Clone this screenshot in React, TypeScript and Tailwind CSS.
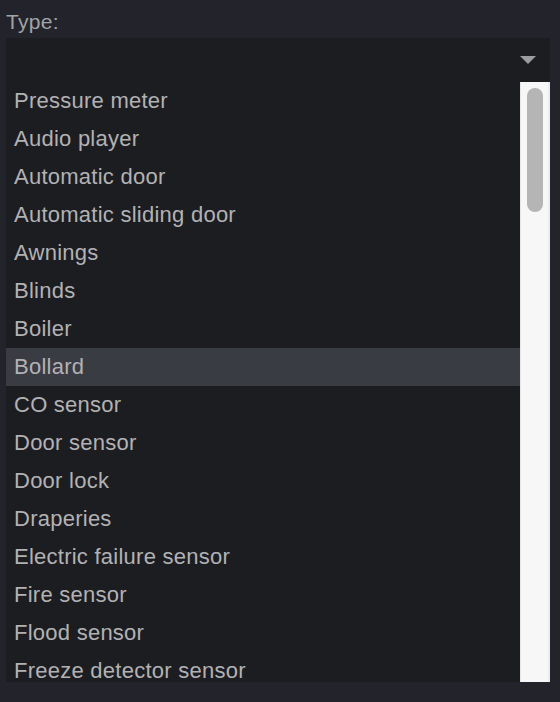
import { useState } from "react";

const types = [
  "Pressure meter",
  "Audio player",
  "Automatic door",
  "Automatic sliding door",
  "Awnings",
  "Blinds",
  "Boiler",
  "Bollard",
  "CO sensor",
  "Door sensor",
  "Door lock",
  "Draperies",
  "Electric failure sensor",
  "Fire sensor",
  "Flood sensor",
  "Freeze detector sensor",
];

export default function App() {
  const [selected, setSelected] = useState("Bollard");

  return (
    <div
      className="w-[560px] h-[702px] bg-[#22232b] px-[6px] pt-[8px] overflow-hidden"
      style={{ fontFamily: '"Liberation Sans", Arial, sans-serif' }}
    >
      <div className="text-[21px] leading-[28px] text-[#a3a3a6] mb-[2px] tracking-[0.3px]">Type:</div>

      <div className="w-[544px] bg-[#1c1d21]">
        {/* Select header */}
        <div className="h-[44px] flex items-center justify-end pr-[14px]">
          <svg width="16" height="8" viewBox="0 0 16 8">
            <path d="M0 0 L16 0 L8 8 Z" fill="#9c9c9e" />
          </svg>
        </div>

        {/* Options list */}
        <div className="flex h-[600px]">
          <div className="flex-1 overflow-hidden">
            {types.map((t) => (
              <div
                key={t}
                onClick={() => setSelected(t)}
                className={`h-[38px] flex items-center pl-[8px] pb-[2px] text-[22px] tracking-[0.25px] text-[#b2b2b4] ${
                  selected === t ? "bg-[#3a3c44]" : ""
                }`}
              >
                {t}
              </div>
            ))}
          </div>
          <div className="w-[30px] bg-[#f7f7f7] border-l border-[#e6e6e6] border-r-[2px] border-r-[#ececec] pt-[6px] flex justify-center">
            <div className="w-[16px] h-[124px] rounded-full bg-[#b5b5b5]" />
          </div>
        </div>
      </div>
    </div>
  );
}
